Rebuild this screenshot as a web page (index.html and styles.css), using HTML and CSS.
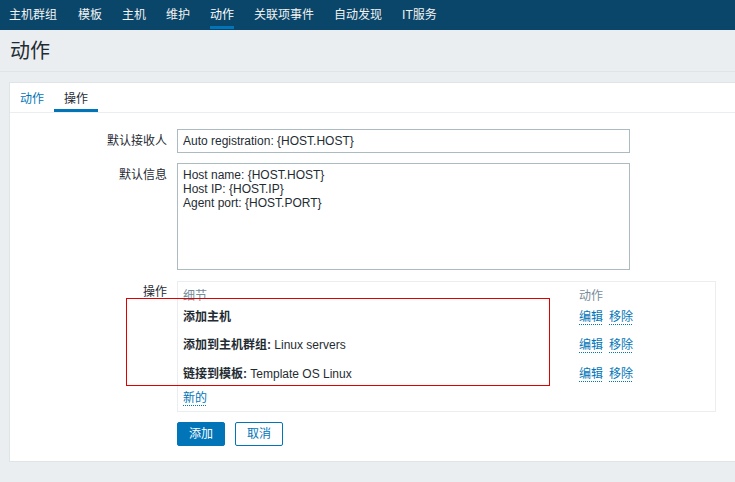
FILE: index.html
```html
<!DOCTYPE html>
<html lang="zh-CN">
<head>
<meta charset="utf-8">
<title>动作</title>
<link rel="stylesheet" href="styles.css">
</head>
<body>
<nav class="topnav">
  <a class="nav-item">主机群组</a>
  <a class="nav-item">模板</a>
  <a class="nav-item">主机</a>
  <a class="nav-item">维护</a>
  <a class="nav-item active">动作</a>
  <a class="nav-item">关联项事件</a>
  <a class="nav-item">自动发现</a>
  <a class="nav-item">IT服务</a>
</nav>
<header class="page-header">
  <h1 class="page-title">动作</h1>
</header>
<main class="panel">
  <div class="tabs">
    <a class="tab">动作</a>
    <a class="tab active">操作</a>
  </div>
  <form class="form">
    <div class="form-row">
      <label class="form-label">默认接收人</label>
      <div class="form-field">
        <input class="text-input" type="text" value="Auto registration: {HOST.HOST}">
      </div>
    </div>
    <div class="form-row">
      <label class="form-label">默认信息</label>
      <div class="form-field">
        <textarea class="text-area">Host name: {HOST.HOST}
Host IP: {HOST.IP}
Agent port: {HOST.PORT}</textarea>
      </div>
    </div>
    <div class="form-row">
      <label class="form-label">操作</label>
      <div class="form-field">
        <div class="ops-box">
          <div class="ops-grid">
            <div class="cell head">细节</div>
            <div class="cell head">动作</div>
            <div class="cell"><b>添加主机</b></div>
            <div class="cell"><a class="link">编辑</a><a class="link">移除</a></div>
            <div class="cell"><b>添加到主机群组:</b> Linux servers</div>
            <div class="cell"><a class="link">编辑</a><a class="link">移除</a></div>
            <div class="cell row-last"><b>链接到模板:</b> Template OS Linux</div>
            <div class="cell row-last"><a class="link">编辑</a><a class="link">移除</a></div>
            <div class="cell new-cell"><a class="link">新的</a></div>
          </div>
        </div>
      </div>
    </div>
    <div class="form-row buttons-row">
      <div class="form-label"></div>
      <div class="form-field buttons">
        <button type="button" class="btn primary">添加</button>
        <button type="button" class="btn secondary">取消</button>
      </div>
    </div>
  </form>
</main>
<div class="annotation"></div>
</body>
</html>
```

FILE: styles.css
```css
* { box-sizing: border-box; }

html, body {
  margin: 0;
  padding: 0;
}

body {
  background: #ebeef0;
  font-family: "Liberation Sans", "Noto Sans CJK SC", sans-serif;
  font-size: 12px;
  line-height: 14px;
  color: #1f2c33;
  overflow: hidden;
  position: relative;
  min-height: 482px;
}

.topnav {
  height: 30px;
  background: #0a466a;
  display: flex;
  align-items: stretch;
  padding-left: 0;
}

.nav-item {
  position: relative;
  display: flex;
  align-items: center;
  padding: 0 10px 1px 10px;
  color: #f2f2f2;
  text-decoration: none;
  line-height: 14px;
}

.nav-item:first-child { padding-left: 9px; padding-right: 11px; }

.nav-item.active { color: #ffffff; }

.nav-item.active::after {
  content: "";
  position: absolute;
  left: 10px;
  right: 10px;
  bottom: 1px;
  height: 3px;
  background: #0275b8;
}

.page-header {
  height: 42px;
  border-bottom: 1px solid #dfe4e7;
  padding: 0 10px;
  display: flex;
  align-items: center;
}

.page-title {
  margin: 0;
  font-size: 20px;
  line-height: 24px;
  font-weight: normal;
  color: #1f2c33;
  padding-top: 1px;
}

.panel {
  margin: 10px -20px 0 9px;
  background: #ffffff;
  border: 1px solid #dfe4e7;
  padding-bottom: 15px;
}

.tabs {
  display: flex;
  border-bottom: 1px solid #ebeef0;
  height: 30px;
}

.tab {
  padding: 9px 10px 0 10px;
  color: #0275b8;
  text-decoration: none;
  border-bottom: 3px solid transparent;
}

.tab.active {
  color: #1f2c33;
  border-bottom-color: #0275b8;
}

.form {
  padding-top: 16px;
}

.form-row {
  display: flex;
  align-items: flex-start;
  margin-bottom: 10px;
}

.form-label {
  width: 157px;
  flex: none;
  text-align: right;
  padding-top: 5px;
  padding-right: 0;
  margin-right: 10px;
  color: #1f2c33;
}

.form-field {
  flex: none;
}

.text-input {
  display: block;
  width: 453px;
  height: 24px;
  border: 1px solid #acbbc2;
  padding: 0 5px;
  font: inherit;
  color: #1f2c33;
  background: #fff;
  line-height: 22px;
  margin: 0;
}

.text-area {
  display: block;
  width: 453px;
  height: 107px;
  border: 1px solid #acbbc2;
  padding: 4px 5px;
  font: inherit;
  line-height: 14px;
  color: #1f2c33;
  resize: none;
  margin: 0;
}

.ops-box {
  width: 539px;
  border: 1px solid #ebeef0;
  margin-top: 1px;
}

.ops-grid {
  display: grid;
  grid-template-columns: 396px 1fr;
}

.cell {
  padding: 7px 5px;
  line-height: 14px;
  white-space: nowrap;
}

.cell.head {
  color: #768d99;
  padding: 7px 5px 0 5px;
  height: 21px;
}

.cell.row-last {
  padding-top: 8px;
}

.cell b { font-weight: bold; }

.new-cell {
  padding-top: 3px;
  padding-bottom: 6px;
}

.link {
  color: #0275b8;
  text-decoration: underline dotted #0275b8;
  text-underline-offset: 3px;
  text-decoration-thickness: 1px;
  margin-right: 6px;
  cursor: pointer;
}

.buttons-row {
  margin-top: 10px;
  margin-bottom: 0;
}

.buttons {
  display: flex;
  gap: 10px;
}

.btn {
  height: 24px;
  padding: 0 11px;
  border: 1px solid #0275b8;
  border-radius: 2px;
  font: inherit;
  line-height: 22px;
  margin: 0;
}

.btn.primary {
  background: #0275b8;
  color: #ffffff;
}

.btn.secondary {
  background: #ffffff;
  color: #0275b8;
}

.annotation {
  position: absolute;
  left: 126px;
  top: 298px;
  width: 424px;
  height: 88px;
  border: 1px solid #e00000;
  pointer-events: none;
}
```
